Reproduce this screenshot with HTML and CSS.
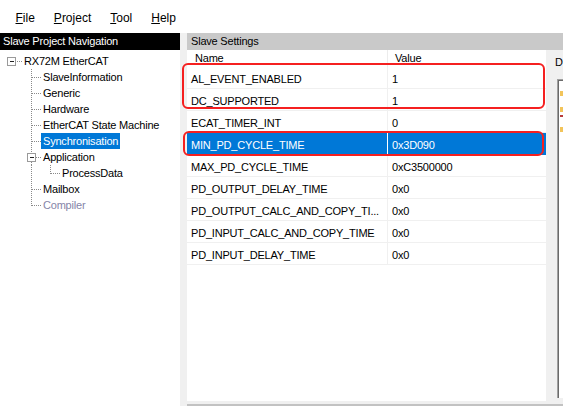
FILE: index.html
```html
<!DOCTYPE html>
<html>
<head>
<meta charset="utf-8">
<link rel="stylesheet" href="styles.css">
</head>
<body>
<div class="menubar">
  <span class="menu"><u>F</u>ile</span>
  <span class="menu"><u>P</u>roject</span>
  <span class="menu"><u>T</u>ool</span>
  <span class="menu"><u>H</u>elp</span>
</div>
<div class="main">
  <div class="nav">
    <div class="nav-head">Slave Project Navigation</div>
    <div class="tree">
      <div class="node">
        <svg width="22" height="16"><rect x="7.5" y="4.5" width="8" height="8" fill="#fff" stroke="#9a9a9a"/><path d="M9.5 8.5h4" stroke="#222"/><path d="M17 8.5h5" stroke="#8a8a8a" stroke-dasharray="1 1"/></svg>
        <span class="label">RX72M EtherCAT</span>
      </div>
      <div class="node">
        <svg width="41" height="16"><path d="M31.5 0v16M32 8.5h9" stroke="#8a8a8a" stroke-dasharray="1 1"/></svg>
        <span class="label">SlaveInformation</span>
      </div>
      <div class="node">
        <svg width="41" height="16"><path d="M31.5 0v16M32 8.5h9" stroke="#8a8a8a" stroke-dasharray="1 1"/></svg>
        <span class="label">Generic</span>
      </div>
      <div class="node">
        <svg width="41" height="16"><path d="M31.5 0v16M32 8.5h9" stroke="#8a8a8a" stroke-dasharray="1 1"/></svg>
        <span class="label">Hardware</span>
      </div>
      <div class="node">
        <svg width="41" height="16"><path d="M31.5 0v16M32 8.5h9" stroke="#8a8a8a" stroke-dasharray="1 1"/></svg>
        <span class="label">EtherCAT State Machine</span>
      </div>
      <div class="node">
        <svg width="41" height="16"><path d="M31.5 0v16M32 8.5h9" stroke="#8a8a8a" stroke-dasharray="1 1"/></svg>
        <span class="label sel">Synchronisation</span>
      </div>
      <div class="node">
        <svg width="41" height="16"><path d="M31.5 0v4M31.5 13v3M36 8.5h5" stroke="#8a8a8a" stroke-dasharray="1 1"/><rect x="27.5" y="4.5" width="8" height="8" fill="#fff" stroke="#9a9a9a"/><path d="M29.5 8.5h4" stroke="#222"/></svg>
        <span class="label">Application</span>
      </div>
      <div class="node">
        <svg width="60" height="16"><path d="M31.5 0v16M50.5 0v9M51 8.5h9" stroke="#8a8a8a" stroke-dasharray="1 1"/></svg>
        <span class="label">ProcessData</span>
      </div>
      <div class="node">
        <svg width="41" height="16"><path d="M31.5 0v16M32 8.5h9" stroke="#8a8a8a" stroke-dasharray="1 1"/></svg>
        <span class="label">Mailbox</span>
      </div>
      <div class="node">
        <svg width="41" height="16"><path d="M31.5 0v9M32 8.5h9" stroke="#8a8a8a" stroke-dasharray="1 1"/></svg>
        <span class="label dis">Compiler</span>
      </div>
    </div>
  </div>
  <div class="settings">
    <div class="set-head">Slave Settings</div>
    <div class="set-body">
      <div class="table">
        <div class="thead"><div class="c1">Name</div><div class="c2">Value</div></div>
        <div class="row"><div class="c1">AL_EVENT_ENABLED</div><div class="c2">1</div></div>
        <div class="row"><div class="c1">DC_SUPPORTED</div><div class="c2">1</div></div>
        <div class="row"><div class="c1">ECAT_TIMER_INT</div><div class="c2">0</div></div>
        <div class="row sel"><div class="c1">MIN_PD_CYCLE_TIME</div><div class="c2">0x3D090</div></div>
        <div class="row"><div class="c1">MAX_PD_CYCLE_TIME</div><div class="c2">0xC3500000</div></div>
        <div class="row"><div class="c1">PD_OUTPUT_DELAY_TIME</div><div class="c2">0x0</div></div>
        <div class="row"><div class="c1">PD_OUTPUT_CALC_AND_COPY_TI...</div><div class="c2">0x0</div></div>
        <div class="row"><div class="c1">PD_INPUT_CALC_AND_COPY_TIME</div><div class="c2">0x0</div></div>
        <div class="row"><div class="c1">PD_INPUT_DELAY_TIME</div><div class="c2">0x0</div></div>
      </div>
      <div class="desc">
        <div class="desc-label">D</div>
        <div class="desc-box">
          <div class="bit yellow b1"></div>
          <div class="bit yellow b2"></div>
          <div class="bit red b3"></div>
          <div class="bit yellow b4"></div>
        </div>
      </div>
    </div>
  </div>
  <div class="mark mark1"></div>
  <div class="mark mark2"></div>
</div>
</body>
</html>
```
FILE: styles.css
```css
html, body {
  margin: 0;
  padding: 0;
}
body {
  width: 563px;
  height: 406px;
  overflow: hidden;
  font-family: "Liberation Sans", Arial, sans-serif;
  font-size: 11px;
  letter-spacing: -0.2px;
  color: #000;
  background: #f0f0f0;
}
.menubar {
  height: 33px;
  box-sizing: border-box;
  padding: 11px 0 0 6px;
  background: #fff;
  display: flex;
  font-size: 12px;
  letter-spacing: 0;
  line-height: 14px;
}
.menu {
  padding: 0 9.5px;
}
.main {
  position: relative;
  display: flex;
  height: 373px;
}
.nav {
  width: 182px;
  display: flex;
  flex-direction: column;
}
.nav-head {
  height: 17px;
  line-height: 17px;
  background: #000;
  color: #fff;
  padding-left: 3px;
}
.tree {
  flex: 1;
  background: #fff;
  padding-top: 3px;
}
.node {
  display: flex;
  height: 16px;
  line-height: 16px;
}
.node svg {
  flex: none;
  display: block;
  shape-rendering: crispEdges;
}
.label {
  padding: 0 2px;
  white-space: nowrap;
}
.label.sel {
  background: #0078d7;
  color: #fff;
}
.label.dis {
  color: #8585a8;
}
.settings {
  flex: 1;
  margin-left: 7px;
  display: flex;
  flex-direction: column;
}
.set-head {
  height: 17px;
  line-height: 17px;
  background: #c9c9c9;
  padding-left: 4px;
}
.set-body {
  flex: 1;
  display: flex;
  border-bottom: 2px solid #c2c2c2;
}
.table {
  width: 359px;
  flex: none;
  background: #fff;
  margin-bottom: 3px;
}
.thead {
  display: flex;
  height: 17px;
  line-height: 17px;
}
.thead .c1 {
  width: 200px;
  box-sizing: border-box;
  padding-left: 8px;
}
.thead .c2 {
  flex: 1;
  border-left: 1px solid #ececec;
  padding-left: 7px;
}
.row {
  display: flex;
  height: 22px;
  box-sizing: border-box;
  border-bottom: 1px solid #f0f0f0;
}
.row .c1, .row .c2 {
  padding-top: 3px;
  line-height: 18px;
  white-space: nowrap;
  overflow: hidden;
}
.row .c1 {
  width: 200px;
  box-sizing: border-box;
  padding-left: 4px;
}
.row .c2 {
  flex: 1;
  border-left: 1px solid #f0f0f0;
  padding-left: 4px;
}
.row.sel {
  background: #0078d7;
  color: #fff;
  border-bottom-color: #0078d7;
}
.row.sel .c2 {
  border-left-color: #fff;
}
.desc {
  flex: 1;
  padding: 4px 0 0 9px;
  overflow: hidden;
}
.desc-label {
  height: 17px;
  line-height: 17px;
}
.desc-box {
  margin: 8px 0 0 2px;
  height: 319px;
  box-sizing: border-box;
  border-left: 1px solid #a0a0a0;
  border-top: 1px solid #a0a0a0;
  box-shadow: inset 1px 1px 0 #6a6a6a;
  background: #fff;
  padding: 11px 0 0 2px;
}
.bit {
  width: 3px;
}
.yellow {
  background: #f2c45a;
  height: 5px;
}
.red {
  background: #b83a3a;
  height: 2px;
}
.b2 { margin-top: 11px; }
.b3 { margin-top: 3px; }
.b4 { margin-top: 10px; }
.mark {
  position: absolute;
  box-sizing: border-box;
  border: 2px solid #f52020;
  border-radius: 6px;
  pointer-events: none;
}
.mark1 {
  left: 182px;
  top: 30px;
  width: 363px;
  height: 46px;
}
.mark2 {
  left: 183px;
  top: 98px;
  width: 361px;
  height: 25px;
}
```
